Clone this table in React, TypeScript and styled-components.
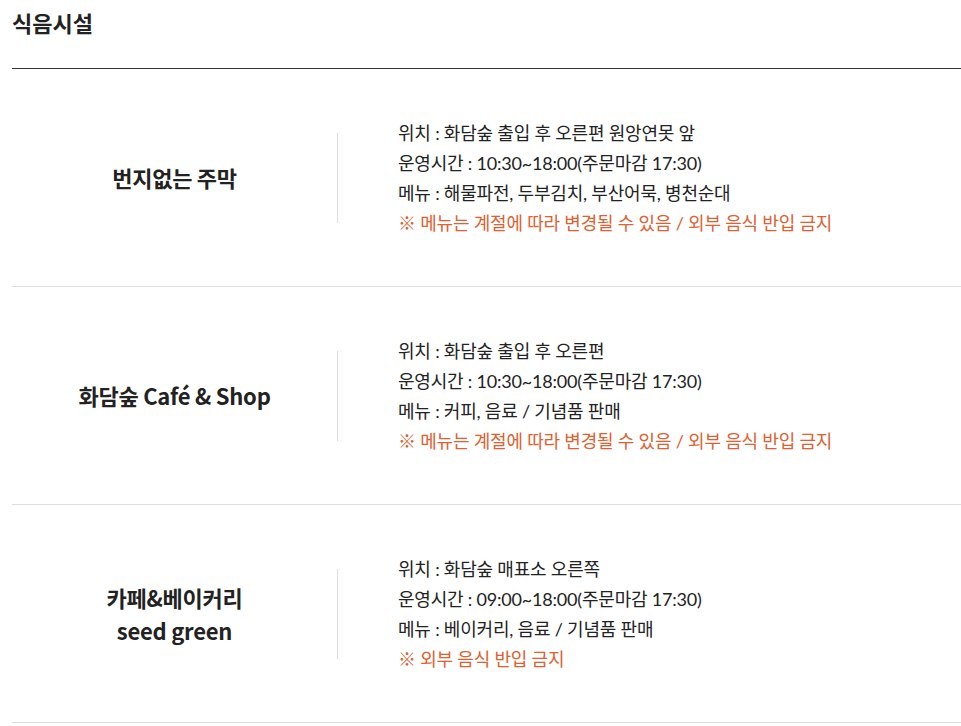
import React from 'react';
import styled, { createGlobalStyle } from 'styled-components';

const GlobalStyle = createGlobalStyle`
  html, body {
    margin: 0;
    padding: 0;
    background: #fff;
  }
  body {
    font-family: Lato, "Noto Sans CJK KR", sans-serif;
    color: #222;
  }
`;

type Facility = {
  name: string[];
  location: string;
  hours: string;
  menu: string;
  notice: string;
};

const facilities: Facility[] = [
  {
    name: ['번지없는 주막'],
    location: '화담숲 출입 후 오른편 원앙연못 앞',
    hours: '10:30~18:00(주문마감 17:30)',
    menu: '해물파전, 두부김치, 부산어묵, 병천순대',
    notice: '※ 메뉴는 계절에 따라 변경될 수 있음 / 외부 음식 반입 금지',
  },
  {
    name: ['화담숲 Café & Shop'],
    location: '화담숲 출입 후 오른편',
    hours: '10:30~18:00(주문마감 17:30)',
    menu: '커피, 음료 / 기념품 판매',
    notice: '※ 메뉴는 계절에 따라 변경될 수 있음 / 외부 음식 반입 금지',
  },
  {
    name: ['카페&베이커리', 'seed green'],
    location: '화담숲 매표소 오른쪽',
    hours: '09:00~18:00(주문마감 17:30)',
    menu: '베이커리, 음료 / 기념품 판매',
    notice: '※ 외부 음식 반입 금지',
  },
];

const Page = styled.div`
  padding-left: 12px;
`;

const Title = styled.h2`
  margin: 0;
  padding-top: 6px;
  height: 62px;
  font-family: "Noto Sans CJK KR", sans-serif;
  font-size: 22px;
  line-height: 32px;
  font-weight: 700;
  color: #222;
  border-bottom: 1px solid #333;
  box-sizing: content-box;
`;

const List = styled.ul`
  margin: 0;
  padding: 0;
  list-style: none;
`;

const Row = styled.li`
  display: flex;
  align-items: center;
  padding: 48.5px 0 48.5px;
  border-bottom: 1px solid #ddd;
`;

const NameCell = styled.div`
  width: 325px;
  flex-shrink: 0;
  display: flex;
  align-items: center;
  justify-content: center;
  height: 90px;
  border-right: 1px solid #ddd;
`;

const Name = styled.strong`
  font-family: "Noto Sans CJK KR", sans-serif;
  font-size: 22px;
  line-height: 33px;
  font-weight: 700;
  color: #222;
  text-align: center;
  letter-spacing: -0.25px;
`;

const Info = styled.ul`
  margin: 0;
  padding: 0 0 0 60px;
  list-style: none;
`;

const InfoLine = styled.li<{ $notice?: boolean }>`
  font-family: Lato, "Noto Sans CJK KR", sans-serif;
  font-size: 18px;
  line-height: 30px;
  letter-spacing: -0.2px;
  color: ${({ $notice }) => ($notice ? '#e0602f' : '#222')};
  white-space: nowrap;
`;

export default function App() {
  return (
    <Page>
      <GlobalStyle />
      <Title>식음시설</Title>
      <List>
        {facilities.map((f) => (
          <Row key={f.name.join(' ')}>
            <NameCell>
              <Name>
                {f.name.map((part, i) => (
                  <React.Fragment key={part}>
                    {i > 0 && <br />}
                    {part}
                  </React.Fragment>
                ))}
              </Name>
            </NameCell>
            <Info>
              <InfoLine>위치 : {f.location}</InfoLine>
              <InfoLine>운영시간 : {f.hours}</InfoLine>
              <InfoLine>메뉴 : {f.menu}</InfoLine>
              <InfoLine $notice>{f.notice}</InfoLine>
            </Info>
          </Row>
        ))}
      </List>
    </Page>
  );
}
